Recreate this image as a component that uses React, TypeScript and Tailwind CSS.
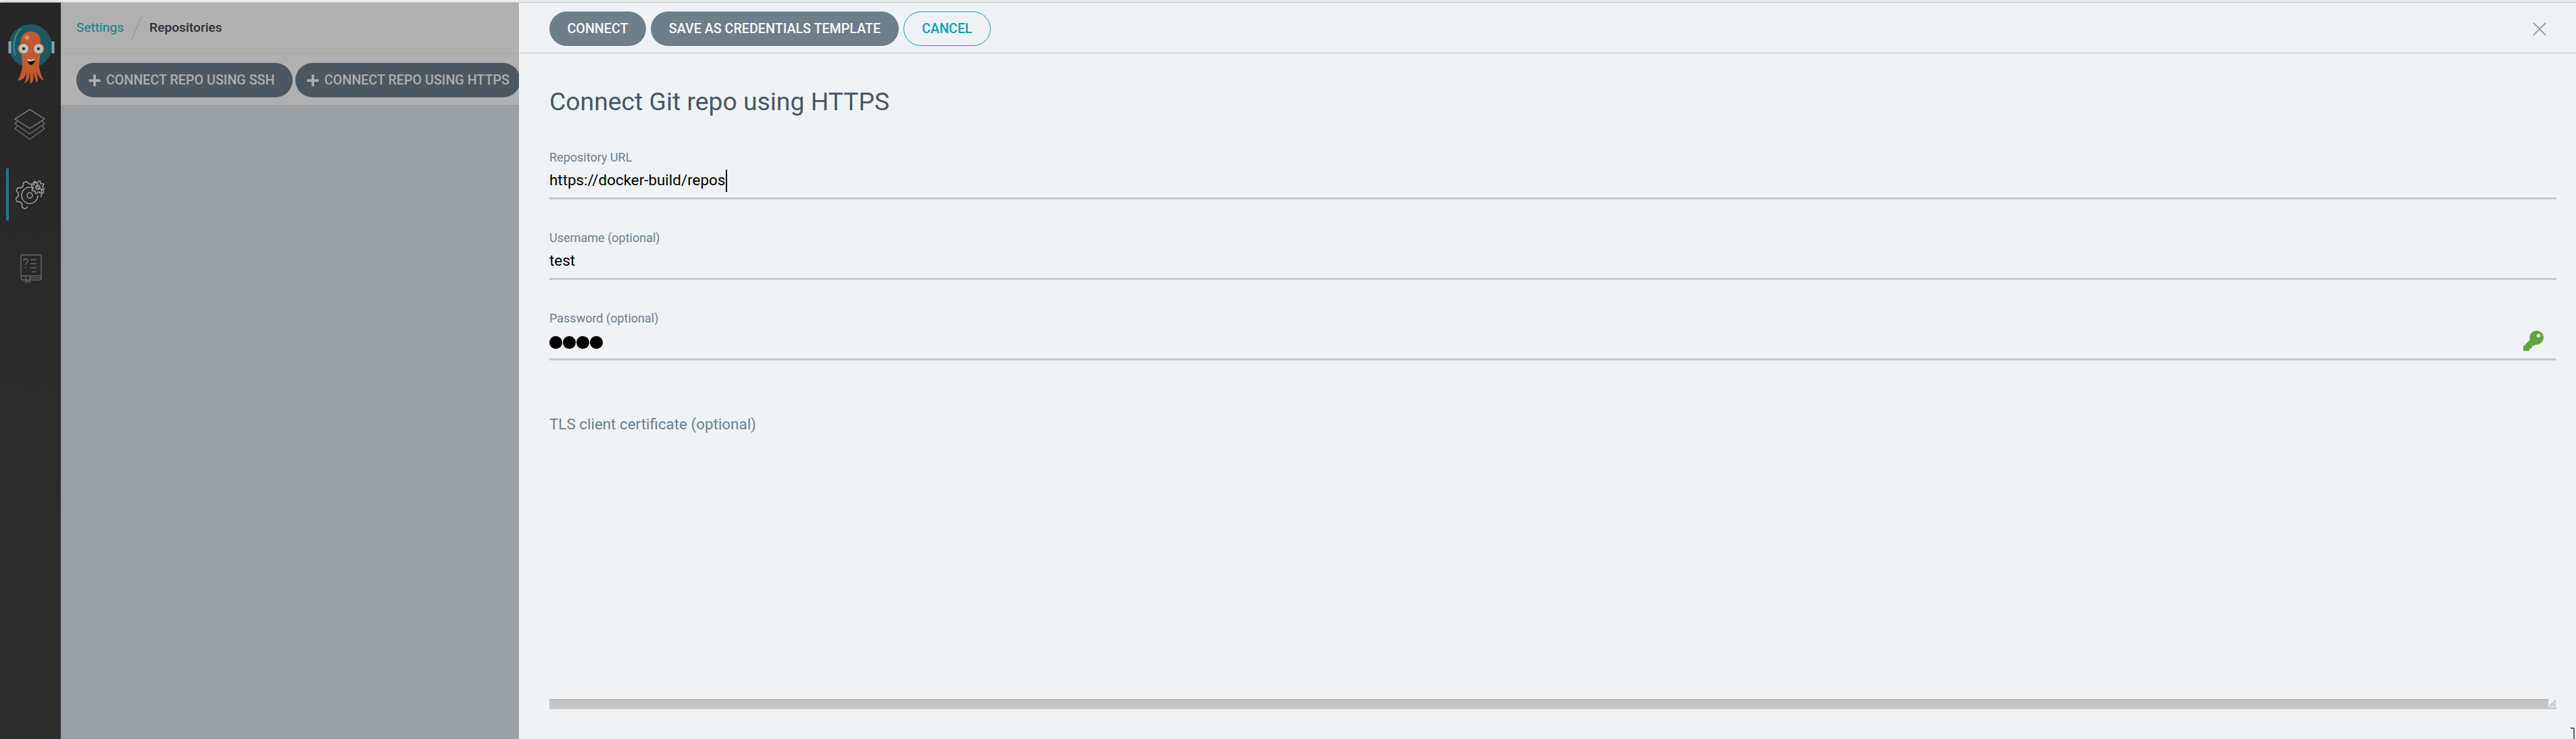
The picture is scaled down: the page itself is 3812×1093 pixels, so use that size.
import { FaKey, FaPlus } from 'react-icons/fa';

const gearPath = (cx: number, cy: number, outer: number, inner: number, teeth: number, from = 0, to = 360) => {
  const step = 360 / teeth;
  const pts: string[] = [];
  const pt = (r: number, deg: number) => {
    const a = (deg * Math.PI) / 180;
    return `${(cx + r * Math.cos(a)).toFixed(2)} ${(cy + r * Math.sin(a)).toFixed(2)}`;
  };
  for (let d = from; d < to - 0.01; d += step) {
    pts.push(`${pts.length ? 'L' : 'M'}${pt(inner, d)}`);
    pts.push(`L${pt(outer, d + step * 0.2)}`);
    pts.push(`A${outer} ${outer} 0 0 1 ${pt(outer, d + step * 0.5)}`);
    pts.push(`L${pt(inner, d + step * 0.7)}`);
    pts.push(`A${inner} ${inner} 0 0 1 ${pt(inner, d + step)}`);
  }
  return pts.join(' ') + (to - from >= 360 ? ' Z' : '');
};

const Logo = () => (
  <svg width="90" height="120" viewBox="0 0 90 120" className="block">
    <circle cx="45" cy="52" r="32" fill="#1c5a62" />
    <path d="M31 27 C22 34 18 50 22 66" fill="none" stroke="#5d8b8f" strokeWidth="1.6" strokeLinecap="round" />
    <rect x="12.5" y="45" width="4" height="18" rx="1" fill="#8ea3b0" />
    <rect x="76.5" y="45" width="4" height="18" rx="1" fill="#8ea3b0" />
    <path d="M31 55 V44 C31 26 60 26 60 44 V55 C60 64 58 72 58 84 H33 C33 72 31 64 31 55 Z" fill="#c4582e" />
    <circle cx="40" cy="39.5" r="3.5" fill="#d98a68" />
    <path d="M33 82 C32 92 28 100 26 103 C34 103 38 98 39 90 C39 98 38 104 36 107 C42 106 44 98 44 90 L45 108 C50 106 50 96 49 90 C52 98 52 104 55 106 C57 102 55 94 54 90 C58 98 60 102 65 103 C62 98 59 92 58 82 Z" fill="#c4582e" />
    <circle cx="35" cy="56" r="8" fill="#bdbdbd" stroke="#b5502b" strokeWidth="1.5" />
    <circle cx="57" cy="56" r="8" fill="#bdbdbd" stroke="#b5502b" strokeWidth="1.5" />
    <circle cx="35" cy="56" r="2" fill="#15151a" />
    <circle cx="57" cy="56" r="2" fill="#15151a" />
    <path d="M40 71 C44 73 49 73 52 70 C52 77 48 80 46 80 C43 80 41 76 40 71 Z" fill="#1a1212" />
    <path d="M40 71 C44 73 49 73 52 70 L51 73 C47 75 44 75 41 74 Z" fill="#d8d8d8" />
  </svg>
);

const LayersIcon = () => (
  <svg width="48" height="47" viewBox="0 0 48 47" fill="none" stroke="#6f6f6f" strokeWidth="1.5" strokeLinejoin="round" className="block">
    <path d="M24 1 L46 15 L24 29 L2 15 Z" />
    <path d="M6 18 L2 22 L24 37 L46 22 L42 18" />
    <path d="M6 25 L2 29 L24 45 L46 29 L42 25" />
  </svg>
);

const GearsIcon = () => (
  <svg width="44" height="46" viewBox="0 0 44 46" fill="none" stroke="#a3a3a3" strokeWidth="1.4" strokeLinejoin="round" className="block">
    <path d={gearPath(21, 24, 21, 17, 8, 100, 350)} />
    <path d="M27 13.6 A12 12 0 1 0 33 24" />
    <circle cx="21" cy="24" r="4" />
    <path d={gearPath(33, 12, 9.5, 7, 8)} />
    <circle cx="33" cy="12" r="3" />
  </svg>
);

const BookIcon = () => (
  <svg width="32" height="43" viewBox="0 0 32 43" fill="none" stroke="#666666" strokeWidth="1.4" strokeLinejoin="round" className="block">
    <path d="M1 33 V3 Q1 1 3 1 H29 Q31 1 31 3 V36 Q31 38 29 38 H4 Q1 38 1 35 Q1 32 4 32 H31" />
    <path d="M8 32 V42 L11 39.5 L14 42 V32" />
    <path d="M15 35 H31" />
    <path d="M15 8 H24 M15 14 H24 M15 20 H24 M17 26 H23" strokeWidth="1.6" />
    <path d="M5 10 Q5 7 8 7 Q11 7 11 10 Q11 12 8 14 V16 M8 19 V21" />
  </svg>
);

const CloseIcon = () => (
  <svg width="20" height="20" viewBox="0 0 20 20" stroke="#8fa4b1" strokeWidth="2" className="block">
    <path d="M1 1 L19 19 M19 1 L1 19" />
  </svg>
);

const Field = ({ label, children, className = '' }: { label: string; children: React.ReactNode; className?: string }) => (
  <div className={`relative flex h-[73px] flex-col border-b-[3px] border-[#c9cacb] pt-[1px] ${className}`}>
    <label className="text-[18px] leading-[20px] text-[#6d7f8b]">{label}</label>
    {children}
  </div>
);

export default function App() {
  return (
    <div className="flex h-screen w-screen flex-col overflow-hidden bg-[#eff3f6] font-['Roboto',sans-serif]">
      <div className="h-[4px] shrink-0 border-b border-[#c8c8c6] bg-[#ebebe9]" />
      <div className="flex min-h-0 flex-1">
        <aside className="flex w-[90px] shrink-0 flex-col items-center bg-gradient-to-b from-[#262626] to-[#2f2f2f] shadow-[2px_0_4px_rgba(0,0,0,0.25)]">
          <div className="mt-[12px] h-[120px]">
            <Logo />
          </div>
          <div className="mt-[25px] -translate-x-[1px]">
            <LayersIcon />
          </div>
          <div className="relative mt-[41px] flex h-[77px] w-full items-center justify-center">
            <span className="absolute left-[9px] top-0 h-full w-[4px] bg-[#13808c]" />
            <GearsIcon />
          </div>
          <div className="mt-[50px] translate-x-[1px]">
            <BookIcon />
          </div>
        </aside>

        <div className="flex w-[678px] shrink-0 flex-col overflow-hidden bg-[#9a9fa3]">
          <div className="flex h-[76px] shrink-0 items-center border-b border-[#a6a8a9] bg-[#b0b0b0] pl-[23px] text-[19.2px]">
            <span className="text-[#0f7f8c]">Settings</span>
            <svg width="16" height="34" viewBox="0 0 16 34" className="ml-[11px] mr-[11px] block" stroke="#8e9091">
              <path d="M15.5 0 L0.5 34" />
            </svg>
            <span className="font-medium text-[#2b3039]">Repositories</span>
          </div>
          <div className="flex h-[75px] shrink-0 items-start gap-[4px] bg-[#b0b0b0] pl-[23px] pt-[13px]">
            <button className="flex h-[51px] w-[320px] shrink-0 items-center gap-[7px] rounded-[26px] bg-[#4c5861] pl-[17px] text-[19.7px] font-medium text-[#abafb1]">
              <FaPlus className="size-[20px]" />
              CONNECT REPO USING SSH
            </button>
            <button className="flex h-[51px] w-[333px] shrink-0 items-center gap-[7px] rounded-[26px] bg-[#4c5861] pl-[16px] text-[19.7px] font-medium text-[#abafb1]">
              <FaPlus className="size-[20px]" />
              CONNECT REPO USING HTTPS
            </button>
          </div>
        </div>

        <main className="flex min-w-0 flex-1 flex-col">
          <div className="flex h-[75px] shrink-0 items-start justify-between border-b-[1px] border-[#c4cdd2] pl-[45px] pr-[44px] pt-[13px]">
            <div className="flex items-center gap-[7px]">
              <button className="flex h-[51px] w-[143px] items-center justify-center rounded-[26px] bg-[#6d7f8b] text-[19.7px] font-medium text-[#f8fbfb]">
                CONNECT
              </button>
              <button className="flex h-[51px] w-[367px] items-center justify-center rounded-[26px] bg-[#6d7f8b] text-[19.7px] font-medium text-[#f8fbfb]">
                SAVE AS CREDENTIALS TEMPLATE
              </button>
              <button className="flex h-[51px] w-[129px] items-center justify-center rounded-[26px] border border-[#00a2b3] text-[19.7px] font-medium text-[#00a2b3]">
                CANCEL
              </button>
            </div>
            <div className="mt-[16px]">
              <CloseIcon />
            </div>
          </div>

          <div className="relative flex min-h-0 flex-1 flex-col pl-[45px] pr-[29px]">
            <h1 className="mt-[49px] text-[37.3px] font-normal leading-[44px] text-[#495763]">Connect Git repo using HTTPS</h1>
            <Field label="Repository URL" className="mt-[50px]">
              <div className="mt-[7px] flex h-[34px] items-center text-[22.4px] text-black">
                https://docker-build/repos
                <span className="ml-[1px] inline-block h-[33px] w-[2px] bg-black" />
              </div>
            </Field>
            <Field label="Username (optional)" className="mt-[46px]">
              <div className="mt-[7px] flex h-[34px] items-center text-[22.4px] text-black">test</div>
            </Field>
            <Field label="Password (optional)" className="mt-[46px]">
              <div className="mt-[8px] flex h-[34px] items-center gap-[1px]">
                <span className="size-[19px] rounded-full bg-black" />
                <span className="size-[19px] rounded-full bg-black" />
                <span className="size-[19px] rounded-full bg-black" />
                <span className="size-[19px] rounded-full bg-black" />
              </div>
              <FaKey className="absolute right-[19px] top-[29px] size-[30px] text-[#5fa63e]" />
            </Field>
            <label className="mt-[80px] text-[22.4px] leading-[28px] text-[#6d7f8b]">TLS client certificate (optional)</label>
            <div className="mt-[393px] flex h-[15px] border-b-[3px] border-[#cbcbcb]">
              <div className="h-[12px] flex-1 border-t border-[#adadab] bg-[#c3c4c3]" />
              <svg width="12" height="12" viewBox="0 0 12 12" stroke="#8a8a8a" className="block shrink-0">
                <path d="M1 11 L11 1 M4 11 L11 4 M7 11 L11 7 M10 11 L11 10" />
              </svg>
            </div>
            <svg width="8" height="17" viewBox="0 0 8 17" fill="none" stroke="#5d6468" strokeWidth="2" className="absolute right-0 bottom-0 block">
              <path d="M0 1 H5 M5 1 V17" />
            </svg>
          </div>
        </main>
      </div>
    </div>
  );
}
